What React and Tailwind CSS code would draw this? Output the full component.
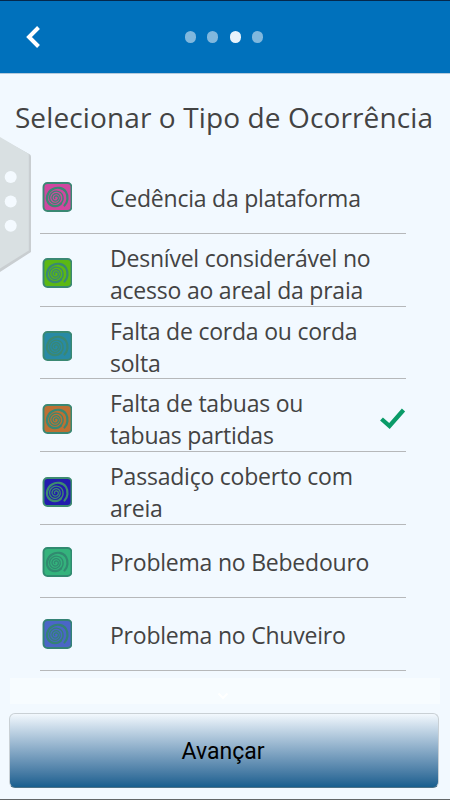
import React from 'react';

const occurrences = [
  { label: ['Cedência da plataforma'], fill: '#cf479f', stroke: '#3a8873' },
  { label: ['Desnível considerável no', 'acesso ao areal da praia'], fill: '#5cb814', stroke: '#3a8873' },
  { label: ['Falta de corda ou corda', 'solta'], fill: '#288aa5', stroke: '#3a8873' },
  { label: ['Falta de tabuas ou', 'tabuas partidas'], fill: '#bd7033', stroke: '#3a8873', selected: true },
  { label: ['Passadiço coberto com', 'areia'], fill: '#221cad', stroke: '#3d8b70' },
  { label: ['Problema no Bebedouro'], fill: '#34b37c', stroke: '#318a70' },
  { label: ['Problema no Chuveiro'], fill: '#4a66c6', stroke: '#348276' },
];

const SpiralIcon = ({ fill, stroke }) => (
  <svg viewBox="0 0 30 30" className="w-[30px] h-[30px] shrink-0 -mt-[1px]" fill="none">
    <rect x="1.5" y="1" width="28" height="28" rx="4" fill={fill} stroke={stroke} strokeWidth="1.900" />
    <g stroke={stroke} strokeLinecap="round" strokeLinejoin="round">
      {/* Outer turn with its tail */}
      <path d="M22.500 23.500C25.800 20.500 26.500 14 24 10C21 5.500 14.500 4.500 10 7.500C5 10.500 3.500 17 6.500 21C9.500 25 16 25 19 21.500" strokeWidth="2.200" />
      {/* Inner turns */}
      <path d="M19 21.500C22.500 17.500 21.500 11 16.500 9.500C12 8.200 7.500 11.500 7.500 15.800C7.500 20 11.500 22.500 15 21C18.500 19.500 19.500 15 17 12.800C14.500 10.500 10.500 12 10 15.200C9.700 18 12.500 20 15 18.500C17 17.200 16.800 14.500 14.800 14C13 13.500 11.800 15.500 12.800 16.500" strokeWidth="1.300" />
    </g>
  </svg>
);

const OccurrenceRow = ({ item }) => (
  <li
    className={`flex items-center h-[72.83px] border-b border-[#b6b8ba] pl-[2px] ${
      item.label.length > 1 ? 'pt-[8px]' : 'pt-[2px]'
    }`}
  >
    <SpiralIcon fill={item.fill} stroke={item.stroke} />
    <div className="ml-[38px] flex-1 text-[23px] leading-[32px] tracking-[-0.220px] whitespace-nowrap">
      {item.label.map((line) => (
        <p key={line}>{line}</p>
      ))}
    </div>
    {item.selected && (
      <svg viewBox="0 0 26 22" className="w-[26px] h-[22px] shrink-0" fill="none">
        <path d="M1.500 11L9.500 18L23.500 2" stroke="#0a9b68" strokeWidth="4.300" />
      </svg>
    )}
  </li>
);

export default function App() {
  return (
    <div className="relative flex flex-col w-[450px] h-[800px] overflow-hidden bg-[#f2f9ff] border-b border-[#636769] text-[#434343] font-['Open_Sans',sans-serif]">
      {/* Header */}
      <header className="flex items-center h-[74px] shrink-0 bg-[#0071bc] border-t border-t-[#04284c] border-b border-b-[#b5cadb] pl-[26px]">
        <svg viewBox="0 0 14 22" className="w-[14px] h-[22px] -mt-[1px]" fill="none">
          <path d="M12.500 1.500L3 11L12.500 20.500" stroke="#ffffff" strokeWidth="4" />
        </svg>
        <div className="flex gap-[11.600px] ml-[144.600px]">
          <span className="w-[11px] h-[12px] rounded-full bg-[#80b8de]" />
          <span className="w-[11px] h-[12px] rounded-full bg-[#80b8de]" />
          <span className="w-[11px] h-[12px] rounded-full bg-[#e8f3fb]" />
          <span className="w-[11px] h-[12px] rounded-full bg-[#80b8de]" />
        </div>
      </header>

      <h1 className="h-[87px] shrink-0 text-center text-[28px] leading-[86px] tracking-[0.120px] whitespace-nowrap -ml-[2px]">
        Selecionar o Tipo de Ocorrência
      </h1>

      <ul className="ml-[40px] w-[366px] shrink-0">
        {occurrences.map((item) => (
          <OccurrenceRow key={item.label[0]} item={item} />
        ))}
      </ul>

      {/* More items below */}
      <div className="mt-[7px] mx-[10px] h-[26px] shrink-0 flex items-center justify-center bg-[#f7fcff] pt-[10px] pr-[4px]">
        <svg viewBox="0 0 12 8" className="w-[12px] h-[8px]" fill="none">
          <path d="M1.500 1.500L6 6L10.500 1.500" stroke="#ffffff" strokeWidth="2" />
        </svg>
      </div>

      <button
        type="button"
        className="mt-[9px] ml-[9px] w-[430px] h-[75px] shrink-0 rounded-[6px] border border-[#c9d0d5] border-b-[#4c7288] bg-linear-to-b from-[#f2f8fd] to-[#175f8f] pt-[3px] pr-[2px] text-[23px] text-black font-['Roboto',sans-serif]"
      >
        Avançar
      </button>

      {/* Side drawer handle */}
      <svg viewBox="0 0 34 140" className="absolute left-0 top-[134px] w-[34px] h-[140px]">
        <path d="M0 4L30 20.500Q31 21 31 23V118L0 138Z" fill="#c9ced1" />
        <path d="M0 3L28 19.500Q28.800 20 28.800 21.500V116.500L0 134.500Z" fill="#d9e0e2" />
        <circle cx="10.700" cy="43" r="6" fill="#f4faff" />
        <circle cx="10.700" cy="67.500" r="6" fill="#f4faff" />
        <circle cx="10.700" cy="91.700" r="6" fill="#f4faff" />
      </svg>
    </div>
  );
}
